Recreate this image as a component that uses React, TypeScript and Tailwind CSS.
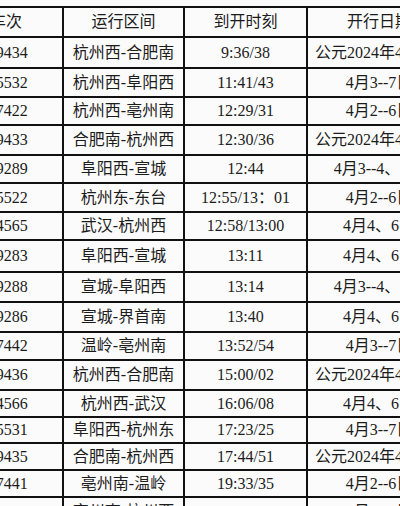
const rows = [
  { h: "h-[31px]", no: "G9434", route: "杭州西-合肥南", time: "9:36/38", days: "公元2024年4月1日" },
  { h: "h-[29px]", no: "G5532", route: "杭州西-阜阳西", time: "11:41/43", days: "4月3--7日" },
  { h: "h-[28px]", no: "G7422", route: "杭州西-亳州南", time: "12:29/31", days: "4月2--6日" },
  { h: "h-[30px]", no: "G9433", route: "合肥南-杭州西", time: "12:30/36", days: "公元2024年4月1日" },
  { h: "h-[28px]", no: "G9289", route: "阜阳西-宣城", time: "12:44", days: "4月3--4、6日" },
  { h: "h-[29px]", no: "G5522", route: "杭州东-东台", time: "12:55/13：01", days: "4月2--6日" },
  { h: "h-[28px]", no: "G4565", route: "武汉-杭州西", time: "12:58/13:00", days: "4月4、6日" },
  { h: "h-[32px]", no: "G9283", route: "阜阳西-宣城", time: "13:11", days: "4月4、6日" },
  { h: "h-[30px]", no: "G9288", route: "宣城-阜阳西", time: "13:14", days: "4月3--4、6日" },
  { h: "h-[30px]", no: "G9286", route: "宣城-界首南", time: "13:40", days: "4月4、6日" },
  { h: "h-[28px]", no: "G7442", route: "温岭-亳州南", time: "13:52/54", days: "4月3--7日" },
  { h: "h-[30px]", no: "G9436", route: "杭州西-合肥南", time: "15:00/02", days: "公元2024年4月1日" },
  { h: "h-[27px]", no: "G4566", route: "杭州西-武汉", time: "16:06/08", days: "4月4、6日" },
  { h: "h-[26px]", no: "G5531", route: "阜阳西-杭州东", time: "17:23/25", days: "4月3--7日" },
  { h: "h-[27px]", no: "G9435", route: "合肥南-杭州西", time: "17:44/51", days: "公元2024年4月1日" },
  { h: "h-[27px]", no: "G7441", route: "亳州南-温岭", time: "19:33/35", days: "4月2--6日" },
  { h: "h-[30px]", no: "G7444", route: "亳州南-杭州西", time: "21:05/07", days: "4月2--6日" },
]

function Row({ h, cells }: { h: string; cells: string[] }) {
  return (
    <div className={`${h} grid grid-cols-[114px_121px_123px_142px] border-b-2 border-[#111]`}>
      {cells.map((c, i) => (
        <div
          key={i}
          className={`flex items-center justify-center whitespace-nowrap ${i < 3 ? "border-r-2 border-[#111]" : ""}`}
        >
          {c}
        </div>
      ))}
    </div>
  )
}

export default function App() {
  return (
    <div className="w-[400px] h-[506px] overflow-hidden bg-[#fbfbfb] pt-[6px] text-[16px] leading-none text-[#1c1c1c] font-['Liberation_Serif','Noto_Sans_CJK_SC',serif]">
      <div className="ml-[-50px] w-[500px] border-t-2 border-[#111]">
        <Row h="h-[30px]" cells={["车次", "运行区间", "到开时刻", "开行日期"]} />
        {rows.map((r) => (
          <Row key={r.no} h={r.h} cells={[r.no, r.route, r.time, r.days]} />
        ))}
      </div>
    </div>
  )
}
